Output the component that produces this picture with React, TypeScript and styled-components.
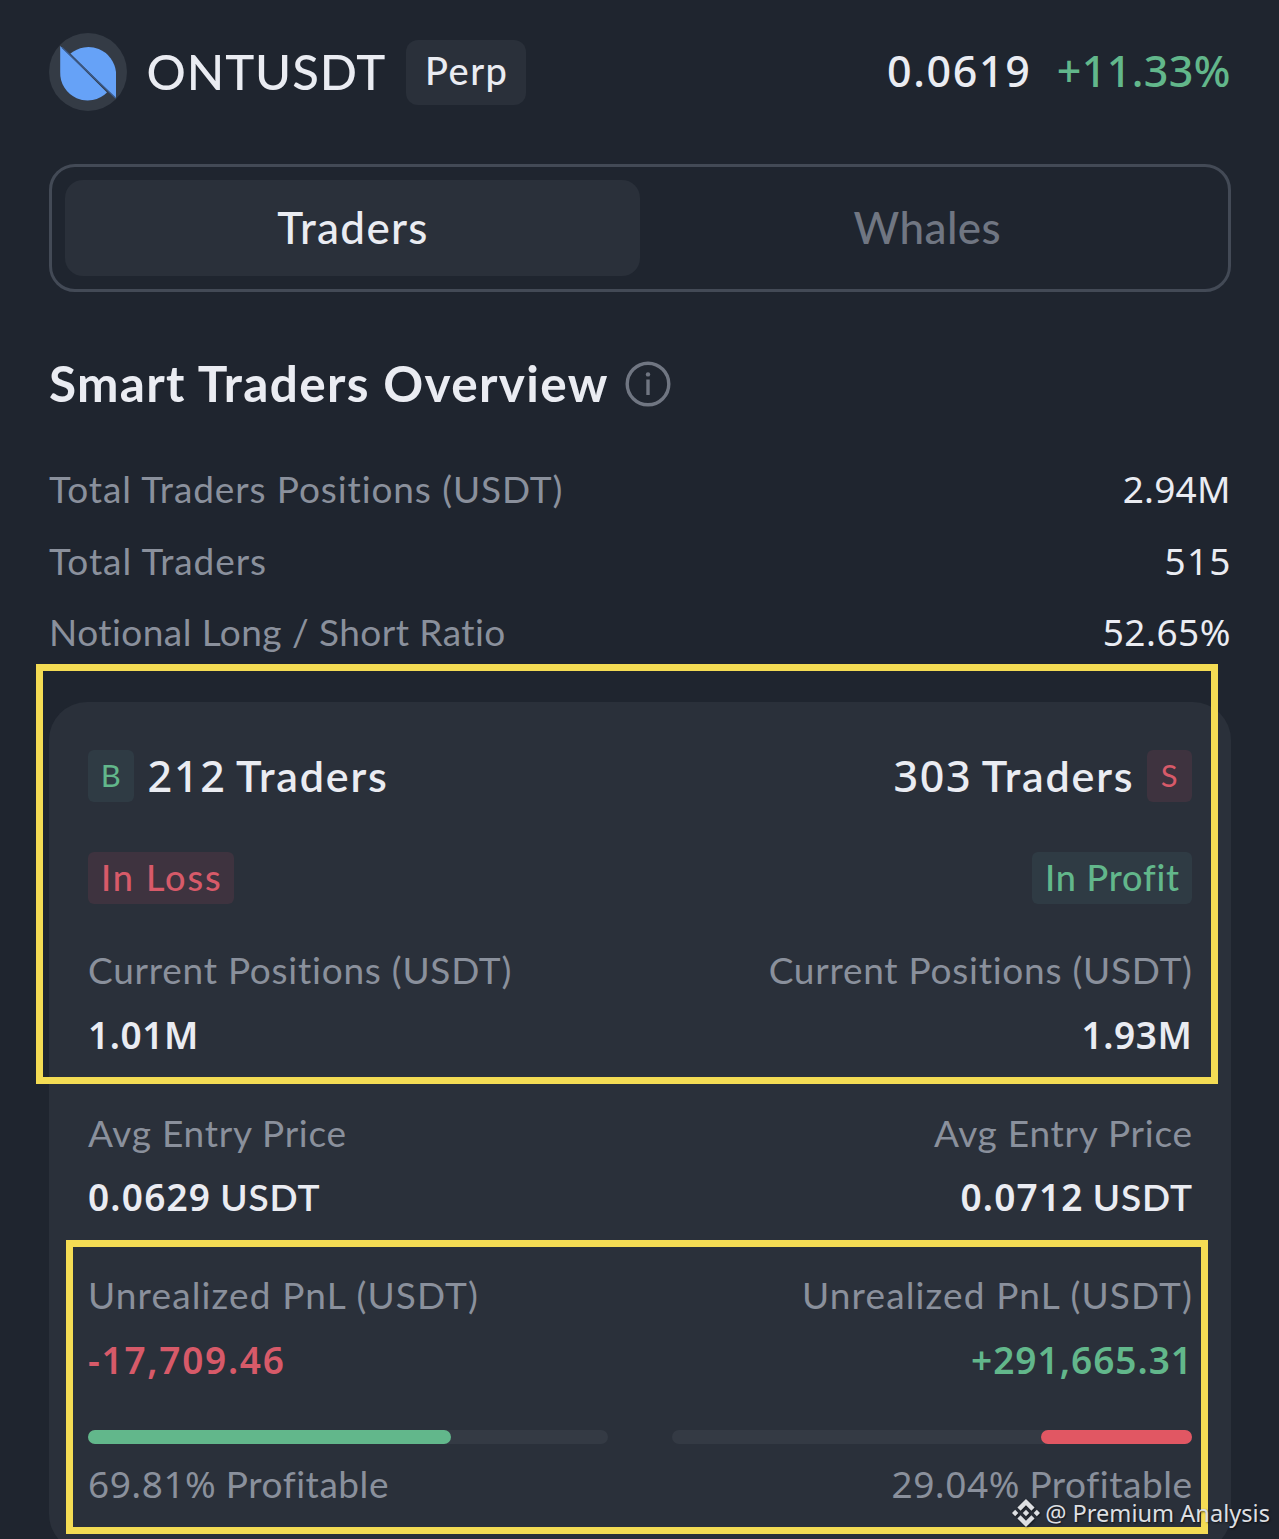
import React from "react";
import styled, { createGlobalStyle } from "styled-components";

const color = {
  page: "#1f252f",
  panel: "#2a303a",
  track: "#343a44",
  line: "#434a56",
  text: "#eaecf2",
  muted: "#8a909c",
  dim: "#707682",
  green: "#62b78b",
  red: "#d75a69",
  mark: "#f4dc54",
};

const textFont = `Lato, "Open Sans", sans-serif`;
const numberFont = `"Noto Sans", "Open Sans", sans-serif`;

const GlobalStyle = createGlobalStyle`
  * { box-sizing: border-box; }
  body {
    margin: 0;
    background: ${color.page};
    color: ${color.text};
    font-family: ${textFont};
    font-variant-ligatures: none;
  }
`;

const Screen = styled.main`
  position: relative;
  height: 1539px;
  overflow: hidden;
  padding: 33px 48.5px 0 49px;
  display: flex;
  flex-direction: column;

  > * { flex-shrink: 0; }
`;

/* The trailing letter gap is pulled back so right-aligned text stays flush. */
const Copy = styled.span<{ $ls?: number }>`
  letter-spacing: ${(p) => p.$ls ?? 0.7}px;
  margin-right: ${(p) => -(p.$ls ?? 0.7)}px;
  white-space: pre;
`;

const Num = styled(Copy)`
  font-family: ${numberFont};
  line-height: 0;
`;

const Header = styled.header`
  display: flex;
  align-items: center;
  height: 78px;
`;

const Logo = styled.svg`
  width: 78px;
  height: 78px;
  flex: none;
`;

const Pair = styled.h1`
  margin: 0 0 0 19.5px;
  padding-bottom: 3px;
  font-size: 49px;
  font-weight: 500;
  line-height: 76px;
  width: 259.5px;
`;

const Perp = styled.span`
  width: 120px;
  height: 65px;
  padding-bottom: 5px;
  border-radius: 12px;
  background: ${color.panel};
  font-size: 38px;
  font-weight: 500;
  line-height: 60px;
  text-align: center;
`;

const Quote = styled.div`
  display: flex;
  gap: 27px;
  margin-left: auto;
  padding-bottom: 2px;
  font-size: 43px;
  font-weight: 500;
  line-height: 74px;
`;

const Price = styled.span`
  color: ${color.text};
`;

const Change = styled.span`
  color: ${color.green};
`;

const Tabs = styled.nav`
  display: grid;
  grid-template-columns: 1fr 1fr;
  height: 128px;
  margin-top: 53px;
  padding: 13px;
  border: 3px solid ${color.line};
  border-radius: 26px;
`;

const Tab = styled.button<{ $active?: boolean }>`
  border: 0;
  border-radius: 18px;
  padding: 0 0 2px;
  background: ${(p) => (p.$active ? color.panel : "transparent")};
  color: ${(p) => (p.$active ? color.text : color.dim)};
  font: 500 44px ${textFont};
`;

const Title = styled.h2`
  display: flex;
  align-items: center;
  height: 60px;
  margin: 61px 0 0;
  font-size: 49.5px;
  font-weight: 700;
  line-height: 60px;
`;

const InfoIcon = styled.svg`
  width: 46px;
  height: 46px;
  margin: 1px 0 0 17.5px;
`;

const Summary = styled.dl`
  margin: 40px 0 0;
  font-size: 37px;
  line-height: 71.5px;
`;

const SummaryRow = styled.div`
  display: flex;
  justify-content: space-between;
  height: 71.5px;
`;

const Term = styled.dt`
  color: ${color.muted};
`;

const Value = styled.dd`
  margin: 0;
`;

const Card = styled.section`
  display: grid;
  grid-template-columns: 1fr 1fr;
  column-gap: 64px;
  height: 850px;
  margin-top: 34px;
  padding: 48px 38.5px 0 39px;
  border-radius: 38px;
  background: ${color.panel};
`;

const Side = styled.div<{ $end?: boolean }>`
  display: flex;
  flex-direction: column;
  align-items: ${(p) => (p.$end ? "flex-end" : "flex-start")};
`;

const SideHead = styled.div<{ $end?: boolean }>`
  display: flex;
  flex-direction: ${(p) => (p.$end ? "row-reverse" : "row")};
  gap: 14px;
  height: 52px;
`;

type Tone = "green" | "red";
const tint = { green: "#2f3b44", red: "#3e333f" };

const Badge = styled.span<{ $tone: Tone }>`
  width: 45.5px;
  height: 52px;
  border-radius: 6px;
  background: ${(p) => tint[p.$tone]};
  color: ${(p) => color[p.$tone]};
  font-size: 31px;
  line-height: 50px;
  text-align: center;
`;

const Count = styled.strong`
  font-size: 43px;
  font-weight: 600;
  line-height: 51px;

  ${Num} { font-weight: 550; }
`;

const Status = styled.span<{ $tone: Tone }>`
  height: 52px;
  margin: 50px 0 34.8px;
  padding: 0 13px;
  border-radius: 6px;
  background: ${(p) => tint[p.$tone]};
  color: ${(p) => color[p.$tone]};
  font-size: 36px;
  font-weight: 500;
  line-height: 50px;
`;

const Stat = styled.div<{ $end?: boolean }>`
  display: flex;
  flex-direction: column;
  align-items: ${(p) => (p.$end ? "flex-end" : "flex-start")};
  height: 129.2px;
  margin-bottom: 33.3px;
  font-size: 37px;
  line-height: 64.6px;
`;

const StatLabel = styled.span`
  color: ${color.muted};
`;

const StatValue = styled.strong<{ $tone?: Tone }>`
  color: ${(p) => (p.$tone ? color[p.$tone] : color.text)};
  font-weight: 600;

  ${Num} { font-weight: 560; }
`;

const Track = styled.div<{ $end?: boolean }>`
  display: flex;
  justify-content: ${(p) => (p.$end ? "flex-end" : "flex-start")};
  width: 100%;
  height: 13.5px;
  margin-top: 4.7px;
  border-radius: 7px;
  background: ${color.track};
`;

const Fill = styled.div<{ $tone: Tone }>`
  border-radius: 7px;
  background: ${(p) => (p.$tone === "red" ? "#e15763" : color.green)};
`;

const Profitable = styled.span`
  margin-top: 15px;
  color: ${color.muted};
  font-size: 37px;
  line-height: 50px;
`;

const Highlight = styled.div<{ $x: number; $y: number; $w: number; $h: number }>`
  position: absolute;
  left: ${(p) => p.$x}px;
  top: ${(p) => p.$y}px;
  width: ${(p) => p.$w}px;
  height: ${(p) => p.$h}px;
  border: 7px solid ${color.mark};
`;

const Watermark = styled.div`
  position: absolute;
  right: 9px;
  bottom: 9px;
  display: flex;
  align-items: center;
  gap: 5px;
  color: #dddfe2;
  font: 23.6px/34px ${numberFont};
  text-shadow: 1px 1px 2px rgba(0, 0, 0, 0.6);
`;

const WatermarkIcon = styled.svg`
  width: 28px;
  height: 28px;
  filter: drop-shadow(1px 1px 1px rgba(0, 0, 0, 0.5));
`;

type SideData = {
  letter: string;
  tone: Tone;
  count: string;
  countLs: number;
  status: string;
  statusLs: number;
  statusTone: Tone;
  position: string;
  entry: string;
  pnl: string;
  pnlLs: number;
  pnlTone: Tone;
  rate: number;
  end?: boolean;
};

const sides: SideData[] = [
  { letter: "B", tone: "green", count: "212", countLs: 1.8, status: "In Loss", statusLs: 1.9, statusTone: "red", position: "1.01M", entry: "0.0629", pnl: "-17,709.46", pnlLs: 1.7, pnlTone: "red", rate: 69.81 },
  { letter: "S", tone: "red", count: "303", countLs: 1.6, status: "In Profit", statusLs: 0.8, statusTone: "green", position: "1.93M", entry: "0.0712", pnl: "+291,665.31", pnlLs: 1, pnlTone: "green", rate: 29.04, end: true },
];

const summary = [
  { label: "Total Traders Positions (USDT)", value: "2.94M", ls: 0.9, vls: 0.2 },
  { label: "Total Traders", value: "515", ls: 0.95, vls: 1.2 },
  { label: "Notional Long / Short Ratio", value: "52.65%", ls: 0.45, vls: 0.5 },
];

function TraderSide({ s }: { s: SideData }) {
  return (
    <Side $end={s.end}>
      <SideHead $end={s.end}>
        <Badge $tone={s.tone}>{s.letter}</Badge>
        <Count><Num $ls={s.countLs}>{s.count}</Num><Copy $ls={1.8}> Traders</Copy></Count>
      </SideHead>
      <Status $tone={s.statusTone}><Copy $ls={s.statusLs}>{s.status}</Copy></Status>
      <Stat $end={s.end}>
        <StatLabel><Copy $ls={0.75}>Current Positions (USDT)</Copy></StatLabel>
        <StatValue><Num $ls={0.6}>{s.position}</Num></StatValue>
      </Stat>
      <Stat $end={s.end}>
        <StatLabel><Copy $ls={0.75}>Avg Entry Price</Copy></StatLabel>
        <StatValue><Num $ls={1.2}>{s.entry}</Num><Copy $ls={0.9}> USDT</Copy></StatValue>
      </Stat>
      <Stat $end={s.end}>
        <StatLabel><Copy $ls={1.15}>Unrealized PnL (USDT)</Copy></StatLabel>
        <StatValue $tone={s.pnlTone}><Num $ls={s.pnlLs}>{s.pnl}</Num></StatValue>
      </Stat>
      <Track $end={s.end}>
        <Fill $tone={s.tone} style={{ width: `${s.rate}%` }} />
      </Track>
      <Profitable><Num $ls={0.5}>{s.rate}%</Num><Copy $ls={0.55}> Profitable</Copy></Profitable>
    </Side>
  );
}

export default function App() {
  return (
    <>
      <GlobalStyle />
      <Screen>
        <Header>
          <Logo viewBox="49 33 78 78">
            <circle cx="88" cy="72" r="39" fill="#343b45" />
            <path d="M60.2 46 L107 92.6 A27.5 27.5 0 0 1 60.2 72 Z" fill="#66a2f7" />
            <path d="M70.4 53.6 A27.8 27.8 0 0 1 116 72 V98.5 Z" fill="#66a2f7" />
            <path d="M62 47.5 L115.5 98" stroke="#3b5b8c" strokeWidth="1.3" />
          </Logo>
          <Pair><Copy $ls={0.9}>ONTUSDT</Copy></Pair>
          <Perp><Copy $ls={1.5}>Perp</Copy></Perp>
          <Quote>
            <Price><Num $ls={1.6}>0.0619</Num></Price>
            <Change><Num $ls={0.4}>+11.33%</Num></Change>
          </Quote>
        </Header>

        <Tabs>
          <Tab $active><Copy $ls={1.3}>Traders</Copy></Tab>
          <Tab><Copy $ls={0.4}>Whales</Copy></Tab>
        </Tabs>

        <Title>
          <Copy $ls={1.35}>Smart Traders Overview</Copy>
          <InfoIcon viewBox="0 0 46 46" fill="none" stroke={color.dim}>
            <circle cx="23" cy="23" r="20.8" strokeWidth="3.4" />
            <path d="M23 18.5V34" strokeWidth="3.4" />
            <circle cx="23" cy="13.4" r="2.2" fill={color.dim} stroke="none" />
          </InfoIcon>
        </Title>

        <Summary>
          {summary.map((r) => (
            <SummaryRow key={r.label}>
              <Term><Copy $ls={r.ls}>{r.label}</Copy></Term>
              <Value><Num $ls={r.vls}>{r.value}</Num></Value>
            </SummaryRow>
          ))}
        </Summary>

        <Card>
          {sides.map((s) => <TraderSide key={s.letter} s={s} />)}
        </Card>

        <Highlight $x={36} $y={664} $w={1182} $h={420} />
        <Highlight $x={66} $y={1240} $w={1142} $h={294} />

        <Watermark>
          <WatermarkIcon viewBox="0 0 24 24" fill="currentColor">
            <path d="M16.624 13.92l2.717 2.716-7.353 7.353-7.353-7.352 2.717-2.717 4.636 4.66 4.636-4.66zm4.637-4.636L24 12l-2.715 2.716L18.568 12l2.693-2.716zm-9.273 0l2.716 2.692-2.716 2.717L9.272 12l2.716-2.716zm-9.272 0L5.409 12l-2.692 2.692L0 12l2.716-2.716zM11.988.012l7.353 7.329-2.717 2.715-4.636-4.636-4.635 4.66-2.718-2.715L11.988.012z" />
          </WatermarkIcon>
          <Copy $ls={0}>@ Premium Analysis</Copy>
        </Watermark>
      </Screen>
    </>
  );
}
